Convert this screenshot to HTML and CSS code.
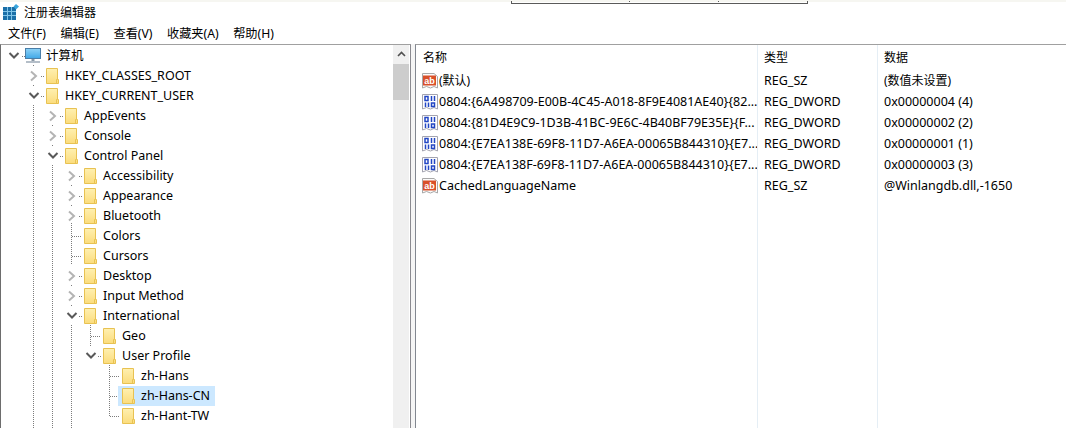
FILE: index.html
```html
<!DOCTYPE html>
<html lang="zh-CN">
<head>
<meta charset="utf-8">
<title>注册表编辑器</title>
<link rel="stylesheet" href="styles.css">
</head>
<body>
<svg class="defs" width="0" height="0" aria-hidden="true">
  <defs>
    <linearGradient id="fg" x1="0" y1="0" x2="0" y2="1"><stop offset="0" stop-color="#fff0b0"/><stop offset="1" stop-color="#fbdc7c"/></linearGradient>
    <linearGradient id="sg" x1="0" y1="0" x2="0" y2="1"><stop offset="0" stop-color="#8fd2f6"/><stop offset="1" stop-color="#3fa8e8"/></linearGradient>
    <symbol id="folder" viewBox="0 0 13 16">
      <path d="M.5.5H11.5V11.5H12.5V15.5H.5Z" fill="url(#fg)" stroke="#e8c252"/>
      <path d="M10.5 15V11.5H11.5" fill="none" stroke="#e8c252"/>
    </symbol>
    <symbol id="closed" viewBox="0 0 10 12"><path d="M2 1.5 7 6 2 10.5" fill="none" stroke="#b4b4b4" stroke-width="2"/></symbol>
    <symbol id="open" viewBox="0 0 12 10"><path d="M1.5 2 6 6.5 10.5 2" fill="none" stroke="#595959" stroke-width="2"/></symbol>
    <symbol id="ab" viewBox="0 0 16 16">
      <path d="M.5.5H12L15.500 3.500V15L12 13.500 8.500 15 4.500 13.500 .5 15Z" fill="#fbfbfb" stroke="#a8a8a8"/>
      <rect x="1" y="2.500" width="13" height="10" fill="#d9502a"/>
      <text x="7.500" y="10.500" class="ab-text">ab</text>
    </symbol>
    <symbol id="bin" viewBox="0 0 16 16">
      <path d="M.5.5H15.500V15L12 13.500 8.500 15 4.500 13.500 .5 15Z" fill="#fff" stroke="#a4a4b0"/>
      <path d="M3 2.500H6V6.500H3ZM9.500 2V7M12.500 2V7M3.500 8.500V13M6.500 8.500V13M9.500 9H12.500V12.500H9.500Z" fill="none" stroke="#2246c4" stroke-width="1.500"/>
    </symbol>
  </defs>
</svg>

<div class="top-strip"></div>
<div class="snip"></div>

<header class="titlebar">
  <svg class="app-icon" width="16" height="16" viewBox="0 0 16 16" aria-hidden="true">
    <rect x="0" y="3" width="13" height="13" fill="#1a6fa8"/>
    <path d="M4.500 3V16M8.500 3V16M0 7.500H13M0 11.500H13" stroke="#7fc4e8" stroke-width="1"/>
    <path d="M13 0 16 2.500 13 5.500 10.500 2.500Z" fill="#38a4dc"/>
  </svg>
  <span class="title">注册表编辑器</span>
</header>

<nav class="menubar">
  <span>文件(F)</span><span>编辑(E)</span><span>查看(V)</span><span>收藏夹(A)</span><span>帮助(H)</span>
</nav>

<main class="panes">
  <section class="tree-pane">
    <div class="tree">
      <svg class="guides" width="393" height="383" aria-hidden="true">
        <path d="M33.500 19V21M33.500 39V41M33.500 59V383M52.500 79V81M52.500 99V101M52.500 119V383M71.500 139V141M71.500 159V161M71.500 177V219M71.500 239V241M71.500 259V261M71.500 279V383M90.500 279V301M109.500 319V370"/>
        <path d="M22 10.500H25M41 30.500H44M41 50.500H44M60 70.500H63M60 90.500H63M60 110.500H63M79 130.500H82M79 150.500H82M79 170.500H82M72 190.500H82M72 210.500H82M79 230.500H82M79 250.500H82M79 270.500H82M91 290.500H101M98 310.500H101M110 330.500H120M110 350.500H120M110 370.500H120"/>
      </svg>
      <div class="row d0"><svg class="exp root-exp" width="12" height="10"><use href="#open"/></svg>
        <svg class="pc" width="17" height="16" viewBox="0 0 17 16" aria-hidden="true">
          <rect x=".5" y=".5" width="15" height="10" fill="url(#sg)" stroke="#4a7ea8"/>
          <rect x="6.500" y="11" width="3" height="2" fill="#8a98a6"/>
          <rect x="1" y="13" width="14" height="2" fill="#b4bec8"/>
        </svg>
        <span class="label">计算机</span></div>
      <div class="row d1"><svg class="exp" width="10" height="12"><use href="#closed"/></svg><svg class="fld" width="13" height="16"><use href="#folder"/></svg><span class="label">HKEY_CLASSES_ROOT</span></div>
      <div class="row d1"><svg class="exp" width="12" height="10"><use href="#open"/></svg><svg class="fld" width="13" height="16"><use href="#folder"/></svg><span class="label">HKEY_CURRENT_USER</span></div>
      <div class="row d2"><svg class="exp" width="10" height="12"><use href="#closed"/></svg><svg class="fld" width="13" height="16"><use href="#folder"/></svg><span class="label">AppEvents</span></div>
      <div class="row d2"><svg class="exp" width="10" height="12"><use href="#closed"/></svg><svg class="fld" width="13" height="16"><use href="#folder"/></svg><span class="label">Console</span></div>
      <div class="row d2"><svg class="exp" width="12" height="10"><use href="#open"/></svg><svg class="fld" width="13" height="16"><use href="#folder"/></svg><span class="label">Control Panel</span></div>
      <div class="row d3"><svg class="exp" width="10" height="12"><use href="#closed"/></svg><svg class="fld" width="13" height="16"><use href="#folder"/></svg><span class="label">Accessibility</span></div>
      <div class="row d3"><svg class="exp" width="10" height="12"><use href="#closed"/></svg><svg class="fld" width="13" height="16"><use href="#folder"/></svg><span class="label">Appearance</span></div>
      <div class="row d3"><svg class="exp" width="10" height="12"><use href="#closed"/></svg><svg class="fld" width="13" height="16"><use href="#folder"/></svg><span class="label">Bluetooth</span></div>
      <div class="row d3"><span class="exp none"></span><svg class="fld" width="13" height="16"><use href="#folder"/></svg><span class="label">Colors</span></div>
      <div class="row d3"><span class="exp none"></span><svg class="fld" width="13" height="16"><use href="#folder"/></svg><span class="label">Cursors</span></div>
      <div class="row d3"><svg class="exp" width="10" height="12"><use href="#closed"/></svg><svg class="fld" width="13" height="16"><use href="#folder"/></svg><span class="label">Desktop</span></div>
      <div class="row d3"><svg class="exp" width="10" height="12"><use href="#closed"/></svg><svg class="fld" width="13" height="16"><use href="#folder"/></svg><span class="label">Input Method</span></div>
      <div class="row d3"><svg class="exp" width="12" height="10"><use href="#open"/></svg><svg class="fld" width="13" height="16"><use href="#folder"/></svg><span class="label">International</span></div>
      <div class="row d4"><span class="exp none"></span><svg class="fld" width="13" height="16"><use href="#folder"/></svg><span class="label">Geo</span></div>
      <div class="row d4"><svg class="exp" width="12" height="10"><use href="#open"/></svg><svg class="fld" width="13" height="16"><use href="#folder"/></svg><span class="label">User Profile</span></div>
      <div class="row d5"><span class="exp none"></span><svg class="fld" width="13" height="16"><use href="#folder"/></svg><span class="label">zh-Hans</span></div>
      <div class="row d5 selected"><span class="exp none"></span><svg class="fld" width="13" height="16"><use href="#folder"/></svg><span class="label">zh-Hans-CN</span></div>
      <div class="row d5"><span class="exp none"></span><svg class="fld" width="13" height="16"><use href="#folder"/></svg><span class="label">zh-Hant-TW</span></div>
    </div>
    <div class="scrollbar">
      <svg class="arrow" width="9" height="6" viewBox="0 0 9 6" aria-hidden="true"><path d="M1 5 4.500 1.500 8 5" fill="none" stroke="#505050" stroke-width="1.600"/></svg>
      <div class="thumb"></div>
    </div>
  </section>

  <section class="list-pane">
    <div class="lrow head"><span class="c1">名称</span><span class="c2">类型</span><span class="c3">数据</span></div>
    <div class="lrow"><span class="c1 cjk"><svg class="ico" width="16" height="16"><use href="#ab"/></svg>(默认)</span><span class="c2">REG_SZ</span><span class="c3 cjk">(数值未设置)</span></div>
    <div class="lrow"><span class="c1"><svg class="ico" width="16" height="16"><use href="#bin"/></svg>0804:{6A498709-E00B-4C45-A018-8F9E4081AE40}{82...</span><span class="c2">REG_DWORD</span><span class="c3">0x00000004 (4)</span></div>
    <div class="lrow"><span class="c1"><svg class="ico" width="16" height="16"><use href="#bin"/></svg>0804:{81D4E9C9-1D3B-41BC-9E6C-4B40BF79E35E}{F...</span><span class="c2">REG_DWORD</span><span class="c3">0x00000002 (2)</span></div>
    <div class="lrow"><span class="c1"><svg class="ico" width="16" height="16"><use href="#bin"/></svg>0804:{E7EA138E-69F8-11D7-A6EA-00065B844310}{E7...</span><span class="c2">REG_DWORD</span><span class="c3">0x00000001 (1)</span></div>
    <div class="lrow"><span class="c1"><svg class="ico" width="16" height="16"><use href="#bin"/></svg>0804:{E7EA138F-69F8-11D7-A6EA-00065B844310}{E7...</span><span class="c2">REG_DWORD</span><span class="c3">0x00000003 (3)</span></div>
    <div class="lrow"><span class="c1"><svg class="ico" width="16" height="16"><use href="#ab"/></svg>CachedLanguageName</span><span class="c2">REG_SZ</span><span class="c3">@Winlangdb.dll,-1650</span></div>
  </section>
</main>
</body>
</html>
```
FILE: styles.css
```css
html, body {
  margin: 0;
  height: 100%;
  overflow: hidden;
  background: #fff;
  color: #000;
  font: 12.5px/20px "Noto Sans", "Noto Sans CJK SC", sans-serif;
}
body {
  display: flex;
  flex-direction: column;
  position: relative;
}
.defs { position: absolute; }
.ab-text {
  font: bold 9px "Liberation Sans", sans-serif;
  fill: #fff;
  text-anchor: middle;
}
.top-strip {
  height: 2px;
  margin-bottom: 1px;
  background: #f6f6f1;
  flex: none;
}
.snip {
  position: absolute;
  left: 511px;
  top: 1px;
  width: 295px;
  height: 2px;
  border: 1px solid #5a5a5a;
  border-top: 0;
  background:
    linear-gradient(#5a5a5a, #5a5a5a) 117px 0 / 1px 1px no-repeat,
    linear-gradient(#5a5a5a, #5a5a5a) 206px 0 / 1px 1px no-repeat;
}
.titlebar {
  display: flex;
  align-items: center;
  height: 20px;
  padding-left: 3px;
  gap: 5px;
  font-size: 12px;
  flex: none;
}
.app-icon { flex: none; margin-top: -2px; }
.menubar {
  display: flex;
  box-sizing: border-box;
  height: 21px;
  padding: 1px 0 0 8px;
  align-items: center;
  gap: 14.5px;
  font-size: 12.2px;
  flex: none;
}
.panes {
  display: flex;
  flex: 1;
  min-height: 0;
  background: #f5f5f5;
}
.tree-pane {
  display: flex;
  width: 409px;
  margin-right: 4px;
  background: #fff;
  border: 1px solid #8a8a90;
  border-top-color: #a0a0a0;
  border-left-color: #6d6d6d;
  border-bottom: 0;
  flex: none;
}
.tree {
  position: relative;
  width: 392px;
  padding-top: 1px;
  flex: none;
  overflow: hidden;
}
.guides {
  position: absolute;
  left: -1px;
  top: 1px;
  fill: none;
  stroke: #7c7c7c;
  stroke-dasharray: 1 1;
}
.row {
  position: relative;
  display: flex;
  align-items: center;
  height: 20px;
  width: max-content;
}
.d0 { padding-left: 7px; }
.d1 { padding-left: 27px; }
.d2 { padding-left: 46px; }
.d3 { padding-left: 65px; }
.d4 { padding-left: 84px; }
.d5 { padding-left: 103px; }
.exp {
  width: 12px;
  margin-right: 6px;
  flex: none;
}
.root-exp { margin-right: 5px; }
.exp.none { height: 1px; }
.fld { flex: none; margin-right: 6px; }
.pc { flex: none; margin-right: 4px; }
.label { white-space: nowrap; }
.selected::before {
  content: "";
  position: absolute;
  left: 117px;
  right: -5px;
  top: 0;
  bottom: 0;
  background: #cce8ff;
}
.selected > * { position: relative; }
.scrollbar {
  width: 16px;
  margin-right: 1px;
  background: #f0f0f0;
  display: flex;
  flex-direction: column;
  align-items: center;
  flex: none;
}
.arrow { margin-top: 6px; margin-bottom: 7px; }
.thumb {
  width: 100%;
  height: 36px;
  background: #cdcdcd;
}
.list-pane {
  flex: 1;
  background: #fff;
  border: 1px solid #a0a0a0;
  border-left-color: #828790;
  border-bottom: 0;
  border-right: 0;
  background-image: linear-gradient(#e5eef5, #e5eef5), linear-gradient(#e5eef5, #e5eef5);
  background-size: 1px 100%;
  background-repeat: no-repeat;
  background-position: 341px 0, 461px 0;
}
.lrow {
  display: flex;
  align-items: center;
  height: 21px;
  white-space: nowrap;
}
.lrow.head { height: 25px; font-size: 12px; }
.c1 {
  display: flex;
  align-items: center;
  width: 341px;
  padding-left: 7px;
  box-sizing: border-box;
  overflow: hidden;
}
.c2 { width: 120px; padding-left: 7px; box-sizing: border-box; }
.c3 { padding-left: 7px; }
.cjk { font-size: 12px; }
.ico { flex: none; margin-left: -1px; margin-right: 1px; }
```
